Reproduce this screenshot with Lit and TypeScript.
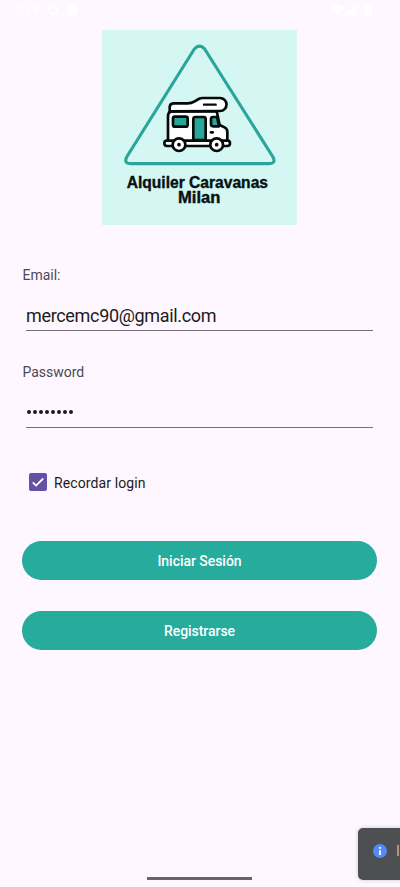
import { LitElement, html, css } from "lit";
import { customElement, property } from "lit/decorators.js";

@customElement("brand-logo")
class BrandLogo extends LitElement {
  static styles = css`
    :host { display: block; width: 195px; height: 195px; background: #d5f7f3; }
    svg { display: block; }
    .name { font: 700 47px "Liberation Sans", Arial, sans-serif; fill: #071313; stroke: #071313; stroke-width: 1.2; }
  `;
  render() {
    return html`<svg width="195" height="195" viewBox="6 6 585 585" fill="none" stroke-linecap="round" stroke-linejoin="round">
      <path d="M283 63 L80 387 Q71 407 92 407 H506 Q529 407 519 387 L314 63 Q299 46 283 63 Z" stroke="#29a699" stroke-width="9.5"/>
      <g stroke="#050a0a" stroke-width="8" fill="#fff">
        <path d="M204 344 V264 Q204 250 218 250 H350 L359 291 L375 299 Q382 303 382 312 V344 Z"/>
        <path d="M209 250 V238 Q209 227 220 226 H263 Q274 226 284 220 L296 213 Q301 210 309 210 H360 A19 19 0 0 1 360 249 Z"/>
        <path d="M312 230 H347" stroke-width="7"/>
        <rect x="193" y="338" width="197" height="16" rx="8"/>
        <rect x="219" y="266" width="44" height="30" rx="6" fill="#29a699"/>
        <path d="M280 336 V273 Q280 267 286 267 H311 Q317 267 317 273 V336 Z" fill="#29a699"/>
        <path d="M351 267 H339 Q333 267 333 273 V289 Q333 295 339 295 H357 Z" fill="#29a699"/>
        <path d="M333 313 H338"/>
        <circle cx="237" cy="350" r="19"/>
        <circle cx="350" cy="350" r="19"/>
      </g>
      <circle cx="237" cy="350" r="5.5" fill="#050a0a"/>
      <circle cx="350" cy="350" r="5.5" fill="#050a0a"/>
      <text class="name" x="80" y="480" textLength="424" lengthAdjust="spacingAndGlyphs">Alquiler Caravanas</text>
      <text class="name" x="234" y="524" textLength="127" lengthAdjust="spacingAndGlyphs">Milan</text>
    </svg>`;
  }
}

@customElement("text-field")
class TextField extends LitElement {
  @property() label = "";
  @property() value = "";
  @property({ type: Boolean }) secret = false;
  static styles = css`
    :host { display: block; height: 97px; }
    .label { height: 20px; line-height: 22px; padding-left: 0.5px; font-size: 14px; letter-spacing: -0.02px; color: #4d4853; }
    .box { margin: 0 4px; height: 47px; box-sizing: border-box; border-bottom: 1px solid #77717b; display: flex; align-items: center; padding-top: 16px; }
    .value { font-size: 18px; line-height: 24px; letter-spacing: -0.33px; padding-top: 1px; color: #1d1b20; }
    .dots { display: flex; gap: 2px; padding: 0 0 1px 1px; }
    .dot { width: 4px; height: 4px; border-radius: 50%; background: #1d1b20; }
  `;
  render() {
    return html`<div class="label">${this.label}</div>
      <div class="box">${this.secret
        ? html`<div class="dots">${Array.from({ length: 8 }, () => html`<span class="dot"></span>`)}</div>`
        : html`<span class="value">${this.value}</span>`}</div>`;
  }
}

@customElement("app-root")
class AppRoot extends LitElement {
  static styles = css`
    :host { display: flex; flex-direction: column; position: relative; height: 887px; overflow: hidden; background: #fef7ff; font-family: Roboto, sans-serif; }
    .status { height: 30px; box-sizing: border-box; padding: 1px 24px 0 14px; display: flex; justify-content: space-between; color: #fff; }
    .status svg { margin-top: 2px; }
    .left { display: flex; gap: 8px; font-size: 13px; line-height: 17px; }
    .logo { align-self: center; margin-right: 1px; }
    .form { padding: 39px 23px 0 22px; }
    .remember { display: flex; align-items: center; gap: 7px; height: 20px; margin: 14px 0 0 7px; font-size: 14px; letter-spacing: 0.11px; color: #1d1b20; }
    .remember span { padding-top: 1px; }
    .check { display: block; }
    .button { display: block; width: 100%; height: 39px; padding: 0; border: 0; border-radius: 20px; background: #26ab9d; color: #fff; font: 500 14px Roboto, sans-serif; letter-spacing: -0.04px; }
    .button.first { margin: 49px 0 31px; }
    .toast { position: absolute; left: 358px; top: 828px; width: 90px; height: 52px; box-sizing: border-box; border-radius: 5px; background: #4e4f50; box-shadow: 0 0 4px #0003; display: flex; align-items: center; gap: 9px; padding: 0 0 6px 15px; color: #b9babb; font: 14px Roboto, sans-serif; }
    .home { position: absolute; left: 147px; bottom: 7px; width: 105px; height: 3px; background: #69636d; }
  `;
  render() {
    return html`
      <div class="status">
        <div class="left"><span>7:19</span>
          <svg width="32" height="14" viewBox="0 0 32 14" fill="#fff"><circle cx="6" cy="7" r="4" fill="none" stroke="#fff" stroke-width="2"/><rect x="21" y="2" width="9" height="10" rx="2"/></svg>
        </div>
        <svg width="46" height="14" viewBox="0 0 46 14" fill="#fff"><path d="M0 4 Q7 -1 14 4 L7 12 Z M26 1 V12 H15 Z"/><rect x="35" y="1" width="7" height="12" rx="1"/></svg>
      </div>
      <brand-logo class="logo"></brand-logo>
      <div class="form">
        <text-field label="Email:" value="mercemc90@gmail.com"></text-field>
        <text-field label="Password" secret></text-field>
        <div class="remember">
          <svg class="check" width="18" height="18" viewBox="0 0 18 18"><rect width="18" height="18" rx="2" fill="#6750a4"/><path d="M3.8 9.3 L7.1 12.6 L14.2 5.5" fill="none" stroke="#fff" stroke-width="1.8"/></svg>
          <span>Recordar login</span>
        </div>
        <button class="button first">Iniciar Sesión</button>
        <button class="button">Registrarse</button>
      </div>
      <div class="toast">
        <svg width="14" height="14" viewBox="0 0 14 14"><circle cx="7" cy="7" r="7" fill="#548af7"/><path d="M7 3 V4.8 M7 6.2 V11" stroke="#fff" stroke-width="1.8"/></svg>
        <span>I</span>
      </div>
      <div class="home"></div>`;
  }
}
